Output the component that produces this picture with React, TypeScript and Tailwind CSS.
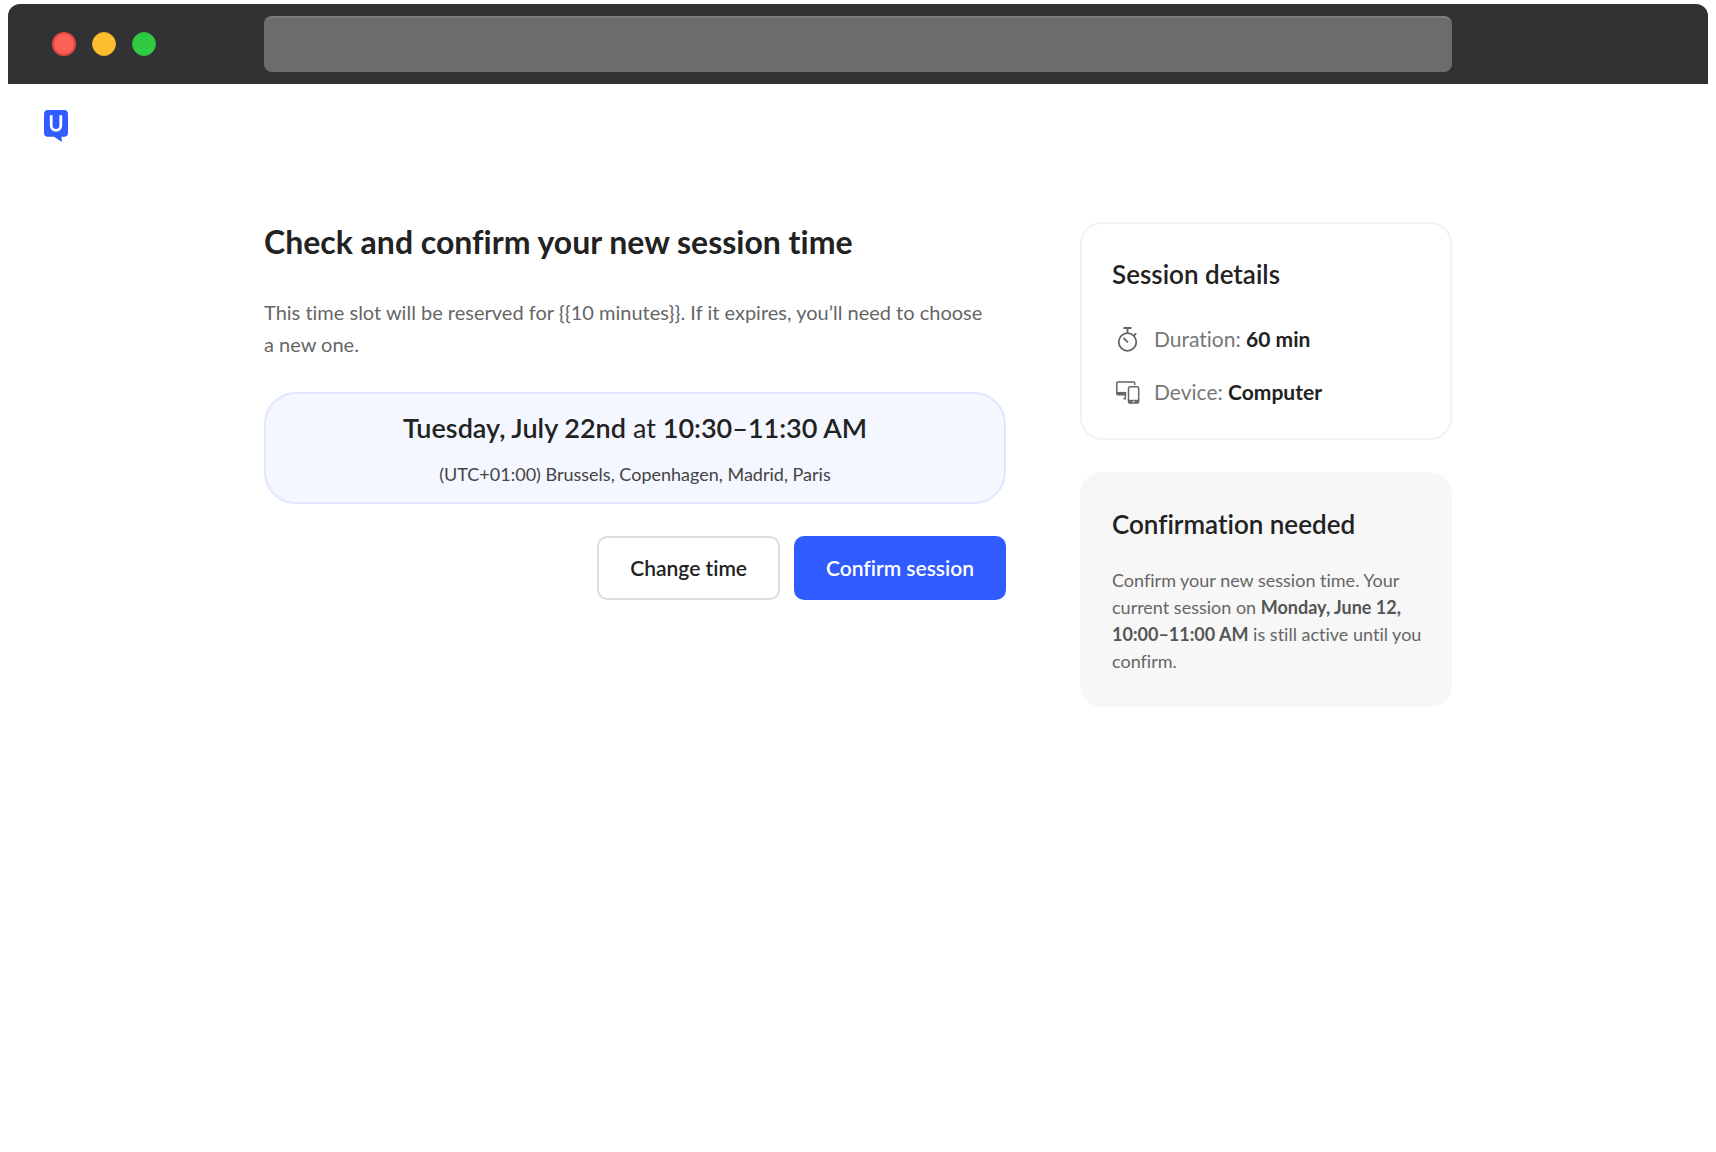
import React from 'react';

function BrowserBar() {
  return (
    <div className="grid h-20 grid-cols-[1fr_minmax(0,1188px)_1fr] items-center rounded-t-xl bg-[#303233]">
      <div className="flex gap-4 pl-11">
        <span className="size-6 rounded-full border-2 border-[#e2483f] bg-[#fc6058]" />
        <span className="size-6 rounded-full border border-[#e9ae2c] bg-[#fdbe30]" />
        <span className="size-6 rounded-full border border-[#2bbb3c] bg-[#30cb43]" />
      </div>
      <input
        type="text"
        aria-label="Address"
        className="h-14 w-full rounded-lg border-t-2 border-[#7c7c7c] bg-[#6c6c6c] px-4 text-lg text-white outline-none"
      />
    </div>
  );
}

function Logo() {
  return (
    <svg width="26" height="34" viewBox="0 0 26 34" fill="none">
      <path
        d="M5 1h16a4 4 0 0 1 4 4v18.700a4 4 0 0 1-4 4h-2.600l.6 5.300-8-5.300H5a4 4 0 0 1-4-4V5a4 4 0 0 1 4-4z"
        fill="#2f5bff"
      />
      <path d="M8.200 6.300v10.200a4.800 4.800 0 0 0 9.600 0V6.300" stroke="#fff" strokeWidth="2.800" />
    </svg>
  );
}

function StopwatchIcon() {
  return (
    <svg width="32" height="32" viewBox="0 0 32 32" fill="none" stroke="#666" strokeWidth="1.800">
      <circle cx="15.500" cy="19" r="8.800" />
      <path d="M11.500 5h8M15.500 5v5M22 12.500l2.200-2.200M11.500 15l4.500 4.300" />
    </svg>
  );
}

function DevicesIcon() {
  return (
    <svg width="32" height="32" viewBox="0 0 32 32" fill="none" stroke="#666" strokeWidth="1.500">
      <path d="M22.700 9V6.900a1 1 0 0 0-1-1H5.800a1 1 0 0 0-1 1v10.800a1 1 0 0 0 1 1h8.400" />
      <path d="M4.500 17.200h9.700" strokeWidth="2.600" />
      <path d="M13.200 19v3.200M11.500 22.800h2.700" />
      <rect x="16.500" y="10.800" width="10.200" height="16.200" rx="1.800" />
      <path d="M16.500 25.300h10.200" strokeWidth="3" />
      <path d="M20.800 25.500h1.600" stroke="#fff" />
    </svg>
  );
}

export default function App() {
  return (
    <div className="min-h-screen bg-white px-2 pt-1 font-[Lato,sans-serif] text-[#222] [font-variant-ligatures:none]">
      <BrowserBar />

      <header className="px-[35px] pt-[25px]">
        <a href="#" aria-label="Home" className="inline-block">
          <Logo />
        </a>
      </header>

      <main className="mx-auto mt-[73px] grid max-w-[1188px] grid-cols-[minmax(0,1fr)_372px] items-start gap-[74px]">
        <section>
          <h1 className="text-[32px] leading-10 font-bold">Check and confirm your new session time</h1>
          <p className="mt-[34px] pr-4 text-xl leading-8 text-[#666]">
            This time slot will be reserved for {'{{10 minutes}}'}. If it expires, you’ll need to choose a new one.
          </p>

          <div className="mt-8 rounded-[32px] border-2 border-[#e0e6ff] bg-[#f4f7ff] px-8 pt-[18px] pb-4 text-center">
            <p className="text-[27px] leading-8">
              <strong className="font-semibold">Tuesday, July 22nd</strong> at{' '}
              <strong className="font-semibold">10:30–11:30 AM</strong>
            </p>
            <p className="mt-[18px] text-lg leading-6 text-[#444]">(UTC+01:00) Brussels, Copenhagen, Madrid, Paris</p>
          </div>

          <div className="mt-8 flex justify-end gap-[14px] text-[21px] font-semibold">
            <button type="button" className="h-16 rounded-[10px] border-2 border-[#dcdcdc] bg-white px-[31px]">
              Change time
            </button>
            <button type="button" className="h-16 rounded-[10px] bg-[#2f5bff] px-8 text-white">
              Confirm session
            </button>
          </div>
        </section>

        <aside className="flex flex-col gap-8">
          <div className="rounded-[22px] border-2 border-[#f2f2f2] px-[30px] pt-[34px] pb-[30px]">
            <h2 className="text-[26px] leading-8 font-semibold">Session details</h2>
            <ul className="mt-[33px] flex flex-col gap-[21px] text-[21px] leading-8">
              <li className="flex items-center gap-[10px]">
                <StopwatchIcon />
                <span className="text-[#777]">
                  Duration: <strong className="text-[#222]">60 min</strong>
                </span>
              </li>
              <li className="flex items-center gap-[10px]">
                <DevicesIcon />
                <span className="text-[#777]">
                  Device: <strong className="text-[#222]">Computer</strong>
                </span>
              </li>
            </ul>
          </div>

          <div className="rounded-[22px] bg-[#f7f7f7] pt-9 pr-6 pb-8 pl-8">
            <h2 className="text-[26px] leading-8 font-semibold">Confirmation needed</h2>
            <p className="mt-[27px] text-lg leading-[27px] text-[#666]">
              Confirm your new session time. Your current session on{' '}
              <strong className="text-[#555]">Monday, June 12, 10:00–11:00 AM</strong> is still active until you
              confirm.
            </p>
          </div>
        </aside>
      </main>
    </div>
  );
}
